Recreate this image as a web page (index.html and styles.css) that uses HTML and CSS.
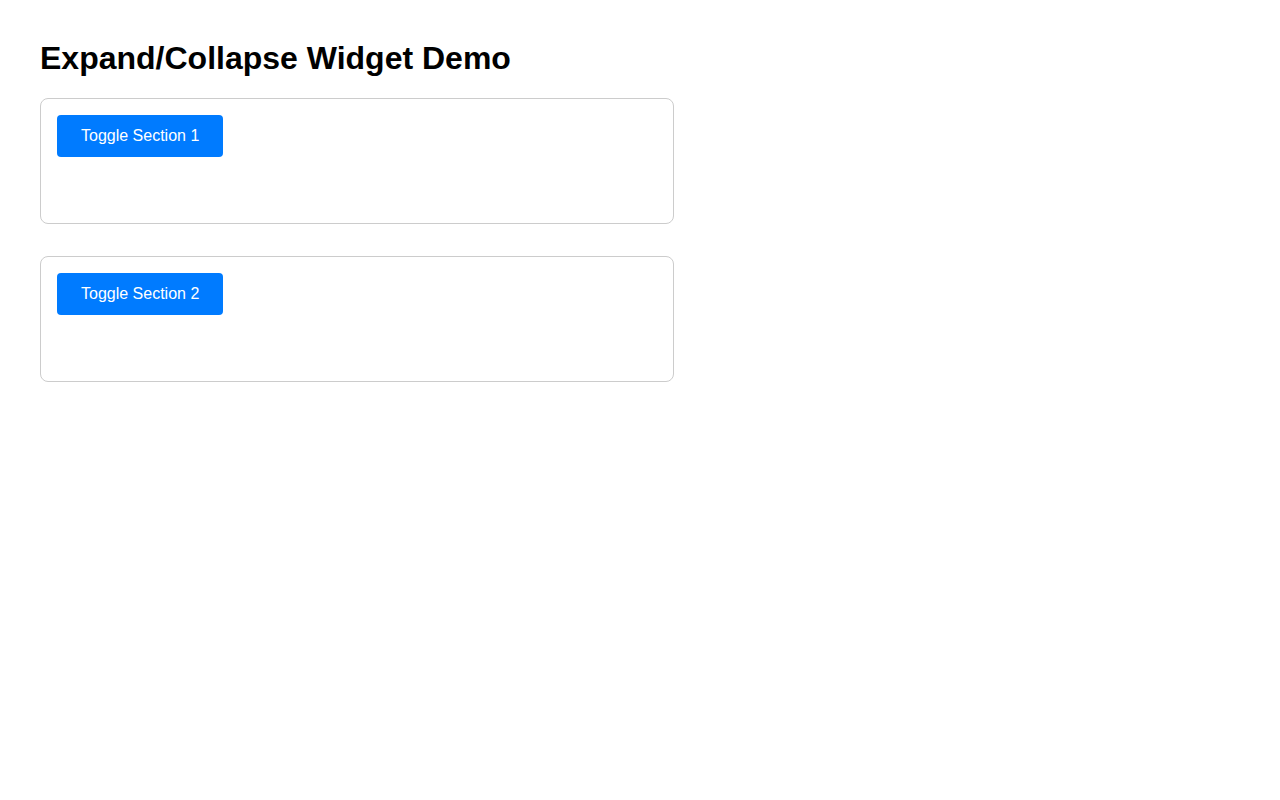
FILE: index.html
```html
<!DOCTYPE html>
<html lang="en">
<head>
  <meta charset="UTF-8">
  <meta name="viewport" content="width=device-width, initial-scale=1.0">
  <title>Expand/Collapse Widget Demo</title>
  <link rel="stylesheet" href="styles.css">
</head>
<body>
  <h1>Expand/Collapse Widget Demo</h1>

  <div class="widget">
    <button class="toggle-btn">Toggle Section 1</button>
    <div class="content"></div>
  </div>

  <div class="widget">
    <button class="toggle-btn">Toggle Section 2</button>
    <div class="content"></div>
  </div>
</body>
</html>
```

FILE: styles.css
```css
body {
  font-family: "Liberation Sans", Arial, sans-serif;
  margin: 0;
  padding: 40px;
  color: #000;
  background: #fff;
}

h1 {
  font-size: 32px;
  margin: 0 0 21px;
}

.widget {
  max-width: 600px;
  border: 1px solid #ccc;
  border-radius: 8px;
  padding: 16px;
  margin-bottom: 32px;
}

.toggle-btn {
  background-color: #007bff;
  color: white;
  border: none;
  border-radius: 4px;
  padding: 12px 24px;
  font-family: inherit;
  font-size: 16px;
  line-height: 18px;
  cursor: pointer;
}

.content {
  margin-top: 10px;
  height: 40px;
  overflow: hidden;
}
```
